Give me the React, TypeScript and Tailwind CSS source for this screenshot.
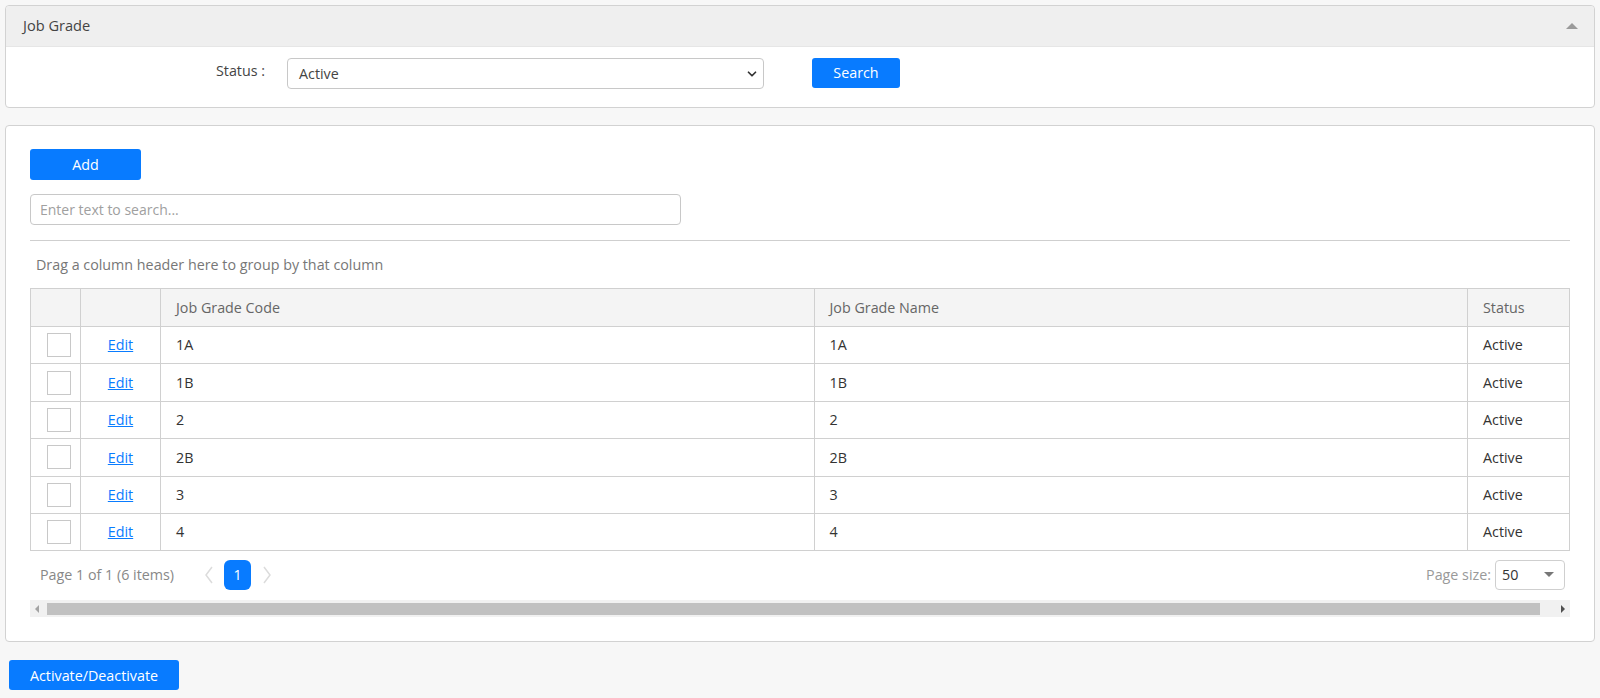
import { ChevronDown } from 'lucide-react';

const rows = [
    { code: '1A', name: '1A', status: 'Active' },
    { code: '1B', name: '1B', status: 'Active' },
    { code: '2', name: '2', status: 'Active' },
    { code: '2B', name: '2B', status: 'Active' },
    { code: '3', name: '3', status: 'Active' },
    { code: '4', name: '4', status: 'Active' },
];

function Chevron({ dir }: { dir: 'left' | 'right' }) {
    return (
        <svg width="10" height="20" viewBox="0 0 10 20" className="text-[#dcdcdc]">
            <path d={dir === 'left' ? 'M8 2 L2 10 L8 18' : 'M2 2 L8 10 L2 18'} fill="none" stroke="currentColor" strokeWidth="1.5" />
        </svg>
    );
}

export default function App() {
    return (
        <div className="min-h-screen bg-[#f7f7f7] px-[5px] pt-[5px] pb-[8px] text-[14.3px] text-[#333] font-['Open_Sans',sans-serif]">
            {/* Filter panel */}
            <section className="rounded-[4px] border border-[#d2d2d2] bg-white">
                <div className="flex h-[41px] items-center justify-between rounded-t-[4px] border-b border-[#e6e6e6] bg-[#efefef] pl-[17px] pr-[16px]">
                    <span className="text-[14.6px] text-[#444]">Job Grade</span>
                    <span className="h-0 w-0 border-x-[6px] border-b-[6px] border-x-transparent border-b-[#9a9a9a]" />
                </div>
                <div className="flex h-[60px] items-start pt-[11px]">
                    <label className="w-[259px] pt-[2px] text-right text-[#444]">Status :</label>
                    <div className="ml-[22px] flex h-[31px] w-[477px] items-center justify-between rounded-[4px] border border-[#c8c8c8] bg-white pl-[11px] pr-[4px]">
                        <span className="text-[#444]">Active</span>
                        <ChevronDown className="h-[14px] w-[14px] text-[#333]" strokeWidth={3} />
                    </div>
                    <button className="ml-[48px] h-[30px] w-[88px] rounded-[3px] bg-[#087bff] text-white">Search</button>
                </div>
            </section>

            {/* Grid panel */}
            <section className="mt-[17px] rounded-[4px] border border-[#d2d2d2] bg-white px-[24px] pt-[23px] pb-[24px]">
                <button className="h-[31px] w-[111px] rounded-[3px] bg-[#087bff] text-white">Add</button>
                <div className="mt-[14px] flex h-[31px] w-[651px] items-center rounded-[4px] border border-[#c8c8c8] px-[9px] text-[14px] text-[#a0a0a0]">
                    Enter text to search...
                </div>
                <div className="mt-[15px] border-t border-[#cfcfcf]" />
                <div className="flex h-[47px] items-center pl-[6px] text-[#777]">Drag a column header here to group by that column</div>

                <table className="w-full table-fixed border-collapse">
                    <colgroup>
                        <col className="w-[50px]" />
                        <col className="w-[80px]" />
                        <col />
                        <col />
                        <col className="w-[102px]" />
                    </colgroup>
                    <thead>
                        <tr className="h-[38px] bg-[#f4f4f4] text-left text-[#666]">
                            <th className="border border-[#d0d0d0] font-normal" />
                            <th className="border border-[#d0d0d0] font-normal" />
                            <th className="border border-[#d0d0d0] pl-[15px] font-normal">Job Grade Code</th>
                            <th className="border border-[#d0d0d0] pl-[15px] font-normal">Job Grade Name</th>
                            <th className="border border-[#d0d0d0] pl-[15px] font-normal">Status</th>
                        </tr>
                    </thead>
                    <tbody>
                        {rows.map((row) => (
                            <tr key={row.code} className="h-[37.4px]">
                                <td className="border border-[#d0d0d0]">
                                    <div className="ml-[16px] h-[24px] w-[24px] border border-[#c8c8c8] bg-white" />
                                </td>
                                <td className="border border-[#d0d0d0] text-center">
                                    <a href="#" className="text-[#0a7cff] underline">Edit</a>
                                </td>
                                <td className="border border-[#d0d0d0] pl-[15px]">{row.code}</td>
                                <td className="border border-[#d0d0d0] pl-[15px]">{row.name}</td>
                                <td className="border border-[#d0d0d0] pl-[15px]">{row.status}</td>
                            </tr>
                        ))}
                    </tbody>
                </table>

                {/* Pager */}
                <div className="flex h-[47px] items-center justify-between pl-[10px] pr-[5px]">
                    <div className="flex items-center">
                        <span className="text-[#888]">Page 1 of 1 (6 items)</span>
                        <span className="ml-[30px] flex"><Chevron dir="left" /></span>
                        <span className="ml-[10px] flex h-[30px] w-[27px] items-center justify-center rounded-[6px] bg-[#087bff] text-white">1</span>
                        <span className="ml-[11px] flex"><Chevron dir="right" /></span>
                    </div>
                    <div className="flex items-center">
                        <span className="text-[#999]">Page size:</span>
                        <div className="ml-[4px] flex h-[30px] w-[70px] items-center justify-between rounded-[4px] border border-[#cfcfcf] pl-[6px] pr-[10px]">
                            <span className="text-[#333]">50</span>
                            <span className="h-0 w-0 border-x-[5px] border-t-[5px] border-x-transparent border-t-[#777]" />
                        </div>
                    </div>
                </div>

                {/* Scrollbar */}
                <div className="mt-[2px] flex h-[17px] items-center bg-[#f1f1f1]">
                    <span className="ml-[5px] h-0 w-0 border-y-[4px] border-r-[4px] border-y-transparent border-r-[#a3a3a3]" />
                    <div className="ml-[8px] h-[12px] flex-1 bg-[#c1c1c1]" />
                    <span className="ml-[21px] mr-[5px] h-0 w-0 border-y-[4px] border-l-[4px] border-y-transparent border-l-[#505050]" />
                </div>
            </section>

            <button className="mt-[18px] ml-[4px] h-[30px] w-[170px] rounded-[3px] bg-[#087bff] text-white">Activate/Deactivate</button>
        </div>
    );
}
